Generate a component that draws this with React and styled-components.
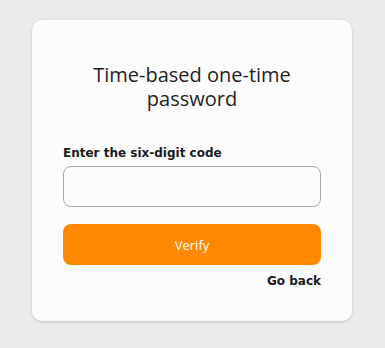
import React, { useState } from "react";
import styled, { createGlobalStyle } from "styled-components";

const GlobalStyle = createGlobalStyle`
   html, body {
      margin: 0;
      padding: 0;
      background: #ebebed;
   }
   * {
      box-sizing: border-box;
   }
`;

const Page = styled("div")`
   min-height: 348px;
   padding: 20px 0 0 32px;
   display: flex;
   align-items: flex-start;
`;

const Card = styled("form")`
   width: 320px;
   height: 301px;
   background: #fcfcfc;
   border-radius: 10px;
   box-shadow: 0 1px 3px rgba(0, 0, 0, 0.18);
   padding: 43px 31px 0;
   display: flex;
   flex-direction: column;
`;

const Title = styled("h2")`
   margin: 0 0 35px;
   font-family: "Open Sans", sans-serif;
   font-weight: 400;
   font-size: 20px;
   line-height: 24px;
   color: #1f1f24;
   text-align: center;
`;

const Label = styled("label")`
   font-family: "DejaVu Sans", sans-serif;
   font-weight: 700;
   font-size: 12px;
   color: #1a1a22;
   margin-bottom: 6px;
`;

const CodeInput = styled("input")`
   height: 41px;
   width: 100%;
   border: 1px solid #aaaab2;
   border-radius: 8px;
   background: #fcfcfc;
   padding: 0 12px;
   font-size: 15px;
   outline: none;
`;

const VerifyButton = styled("button")`
   margin-top: 17px;
   height: 41px;
   width: 100%;
   border: none;
   border-radius: 8px;
   background: ${(p) => p.bg || "#ff8800"};
   color: #ffffff;
   font-family: "Open Sans", sans-serif;
   font-size: 13px;
   cursor: pointer;
`;

const BackLink = styled("a")`
   align-self: flex-end;
   margin-top: 9px;
   font-family: "DejaVu Sans", sans-serif;
   font-weight: 700;
   font-size: 12px;
   color: #1a1a22;
   text-decoration: none;
   cursor: pointer;
`;

const App = () => {
   const [code, setCode] = useState("");
   return (
      <>
         <GlobalStyle />
         <Page>
            <Card onSubmit={(e) => e.preventDefault()}>
               <Title>
                  Time-based one-time
                  <br />
                  password
               </Title>
               <Label htmlFor="otp-code">Enter the six-digit code</Label>
               <CodeInput
                  id="otp-code"
                  name="code"
                  value={code}
                  onChange={(e) => setCode(e.target.value)}
               />
               <VerifyButton type="submit">Verify</VerifyButton>
               <BackLink>Go back</BackLink>
            </Card>
         </Page>
      </>
   );
};
export default App;
